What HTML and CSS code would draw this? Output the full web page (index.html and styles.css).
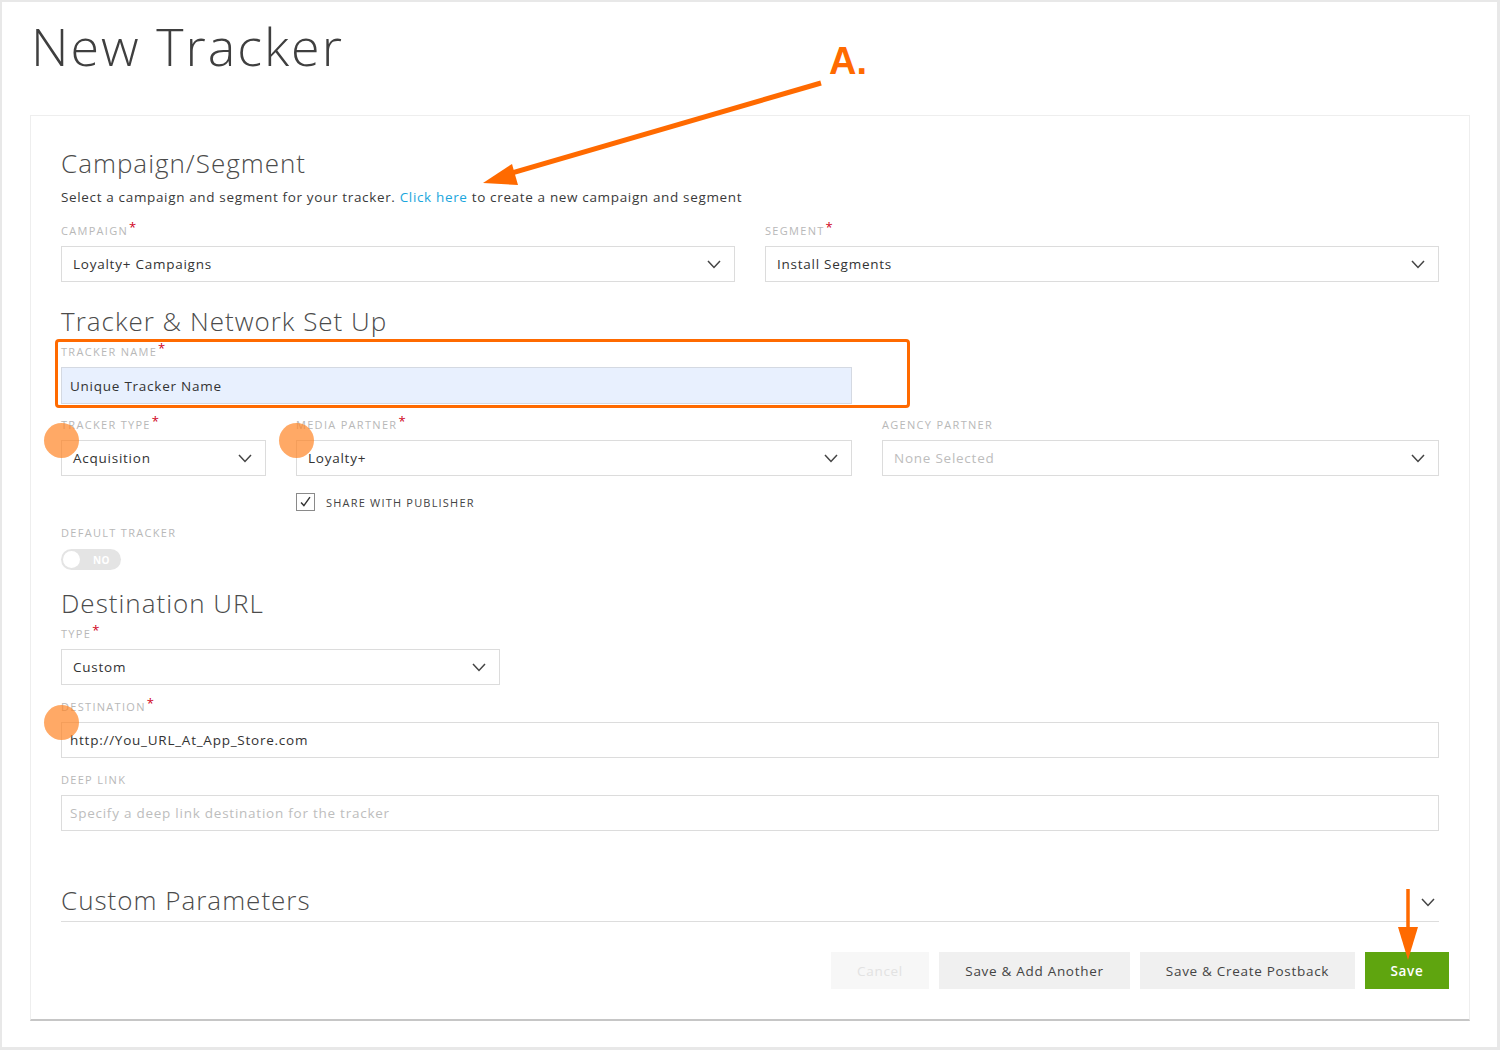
FILE: index.html
```html
<!DOCTYPE html>
<html lang="en">
<head>
    <meta charset="UTF-8">
    <meta name="viewport" content="width=device-width, initial-scale=1.0">
    <title>New Tracker</title>
    <link rel="stylesheet" href="styles.css">
</head>
<body>
    <div class="screen">
        <h1 class="page-title">New Tracker</h1>

        <div class="card">
            <h2 class="section-title">Campaign/Segment</h2>
            <p class="section-desc">Select a campaign and segment for your tracker. <a href="#" class="link">Click here</a> to create a new campaign and segment</p>

            <div class="row row-2">
                <div class="field">
                    <div class="label">Campaign<span class="req">*</span></div>
                    <div class="select">
                        <span>Loyalty+ Campaigns</span>
                        <svg class="chevron" viewBox="0 0 14 9"><path d="M1 1l6 6.5L13 1"/></svg>
                    </div>
                </div>
                <div class="field">
                    <div class="label">Segment<span class="req">*</span></div>
                    <div class="select">
                        <span>Install Segments</span>
                        <svg class="chevron" viewBox="0 0 14 9"><path d="M1 1l6 6.5L13 1"/></svg>
                    </div>
                </div>
            </div>

            <h2 class="section-title section-gap">Tracker &amp; Network Set Up</h2>

            <div class="field tracker-name">
                <div class="label">Tracker Name<span class="req">*</span></div>
                <div class="input input-filled">Unique Tracker Name</div>
            </div>

            <div class="row row-3">
                <div class="field">
                    <div class="label">Tracker Type<span class="req">*</span></div>
                    <div class="select">
                        <span>Acquisition</span>
                        <svg class="chevron" viewBox="0 0 14 9"><path d="M1 1l6 6.5L13 1"/></svg>
                    </div>
                </div>
                <div class="field">
                    <div class="label">Media Partner<span class="req">*</span></div>
                    <div class="select">
                        <span>Loyalty+</span>
                        <svg class="chevron" viewBox="0 0 14 9"><path d="M1 1l6 6.5L13 1"/></svg>
                    </div>
                    <label class="checkbox-row">
                        <span class="checkbox">
                            <svg viewBox="0 0 18 18"><path d="M4 9.5l3.2 3.5L14 3.5"/></svg>
                        </span>
                        <span class="checkbox-text">Share with publisher</span>
                    </label>
                </div>
                <div class="field">
                    <div class="label">Agency Partner</div>
                    <div class="select placeholder">
                        <span>None Selected</span>
                        <svg class="chevron" viewBox="0 0 14 9"><path d="M1 1l6 6.5L13 1"/></svg>
                    </div>
                </div>
            </div>

            <div class="field default-tracker">
                <div class="label">Default Tracker</div>
                <div class="toggle">
                    <span class="toggle-knob"></span>
                    <span class="toggle-text">NO</span>
                </div>
            </div>

            <h2 class="section-title section-gap-sm">Destination URL</h2>

            <div class="field field-type">
                <div class="label">Type<span class="req">*</span></div>
                <div class="select">
                    <span>Custom</span>
                    <svg class="chevron" viewBox="0 0 14 9"><path d="M1 1l6 6.5L13 1"/></svg>
                </div>
            </div>

            <div class="field field-gap">
                <div class="label">Destination<span class="req">*</span></div>
                <div class="input">http://You_URL_At_App_Store.com</div>
            </div>

            <div class="field field-gap">
                <div class="label">Deep Link</div>
                <div class="input placeholder">Specify a deep link destination for the tracker</div>
            </div>

            <div class="collapse-head">
                <h2 class="section-title">Custom Parameters</h2>
                <svg class="chevron" viewBox="0 0 14 9"><path d="M1 1l6 6.5L13 1"/></svg>
            </div>

            <div class="actions">
                <button class="btn btn-disabled">Cancel</button>
                <button class="btn">Save &amp; Add Another</button>
                <button class="btn">Save &amp; Create Postback</button>
                <button class="btn btn-primary">Save</button>
            </div>
        </div>

        <!-- annotations -->
        <div class="highlight-box"></div>
        <span class="dot" style="left: 44px; top: 423px;"></span>
        <span class="dot" style="left: 279px; top: 423px;"></span>
        <span class="dot" style="left: 44px; top: 705px;"></span>
        <div class="callout-label">A.</div>
        <svg class="arrows" viewBox="0 0 1500 1050">
            <line x1="821" y1="83" x2="508" y2="174"/>
            <polygon points="483,183 512,164 518,185"/>
            <line x1="1408" y1="889" x2="1408" y2="930" class="thin"/>
            <polygon points="1398,927 1418,927 1408,960"/>
        </svg>
    </div>
</body>
</html>
```

FILE: styles.css
```css
* {
    margin: 0;
    padding: 0;
    box-sizing: border-box;
}

body {
    font-family: 'Open Sans', 'DejaVu Sans', sans-serif;
    color: #333;
    background: #fff;
}

.screen {
    position: relative;
    width: 1500px;
    height: 1050px;
    padding: 16px 30px 0 30px;
    box-shadow: inset 2px 2px 0 #e8e8e8, inset -3px -3px 0 #e8e8e8;
    overflow: hidden;
}

.page-title {
    font-size: 52px;
    font-weight: 300;
    line-height: 60px;
    height: 60px;
    color: #3f3f3f;
    letter-spacing: 2px;
    padding-left: 1px;
    margin-bottom: 39px;
}

.card {
    width: 1440px;
    height: 906px;
    border: 1px solid #eee;
    border-bottom: 2px solid #c6c6c6;
    padding: 32px 30px 0 30px;
}

.section-title {
    font-size: 26px;
    font-weight: 300;
    line-height: 30px;
    height: 30px;
    color: #4b4b4b;
    letter-spacing: 1px;
}

.section-gap {
    margin-top: 24px;
}

.section-gap-sm {
    margin-top: 18px;
}

.section-desc {
    margin-top: 9px;
    font-size: 13.5px;
    line-height: 20px;
    height: 20px;
    color: #3a3a3a;
    letter-spacing: 0.65px;
}

.link {
    color: #1ba6dd;
    text-decoration: none;
}

.row {
    display: grid;
    gap: 30px;
}

.row-2 {
    margin-top: 16px;
    grid-template-columns: 1fr 1fr;
}

.row-3 {
    margin-top: 13px;
    grid-template-columns: 205px 556px 1fr;
}

.label {
    font-size: 11px;
    line-height: 16px;
    height: 16px;
    color: #b8b8b8;
    text-transform: uppercase;
    letter-spacing: 1.3px;
    margin-bottom: 7px;
}

.req {
    color: #d0021b;
    font-size: 13px;
    line-height: 0;
    position: relative;
    top: -3px;
    margin-left: 1px;
}

.select,
.input {
    height: 36px;
    border: 1px solid #dcdcdc;
    display: flex;
    align-items: center;
    justify-content: space-between;
    font-size: 13.5px;
    letter-spacing: 0.75px;
    color: #333;
    background: #fff;
}

.select {
    padding: 0 13px 0 11px;
}

.input {
    padding: 0 8px;
}

.placeholder {
    color: #bdbdbd;
}

.chevron {
    width: 14px;
    height: 9px;
    fill: none;
    stroke: #444;
    stroke-width: 1.5;
    flex-shrink: 0;
}

.tracker-name {
    width: 791px;
    margin-top: 8px;
}

.input-filled {
    height: 37px;
    background: #e8f0fe;
    border-color: #d4d9e2;
}

.checkbox-row {
    display: flex;
    align-items: center;
    gap: 11px;
    margin-top: 17px;
    height: 18px;
}

.checkbox {
    width: 19px;
    height: 18px;
    border: 1px solid #8a8a8a;
    display: flex;
}

.checkbox svg {
    width: 17px;
    height: 16px;
    fill: none;
    stroke: #333;
    stroke-width: 1.6;
}

.checkbox-text {
    font-size: 11px;
    color: #444;
    text-transform: uppercase;
    letter-spacing: 1.2px;
}

.default-tracker {
    margin-top: 14px;
}

.default-tracker .label {
    margin-bottom: 8px;
}

.toggle {
    width: 60px;
    height: 21px;
    border-radius: 11px;
    background: #e4e4e4;
    display: flex;
    align-items: center;
    padding-left: 2px;
}

.toggle-knob {
    width: 17px;
    height: 17px;
    border-radius: 50%;
    background: #fff;
}

.toggle-text {
    margin-left: 13px;
    font-size: 10px;
    font-weight: 700;
    color: #fff;
    letter-spacing: 0.3px;
}

.field-type {
    width: 439px;
    margin-top: 8px;
}

.field-gap {
    margin-top: 14px;
}

.collapse-head {
    margin-top: 54px;
    height: 37px;
    border-bottom: 1px solid #ddd;
    display: flex;
    justify-content: space-between;
    align-items: flex-start;
    padding-right: 4px;
}

.collapse-head .chevron {
    margin-top: 13px;
}

.actions {
    margin-top: 30px;
    margin-right: -10px;
    display: flex;
    justify-content: flex-end;
    gap: 10px;
}

.btn {
    height: 37px;
    border: none;
    background: #f0f0f0;
    font-family: 'Open Sans', 'DejaVu Sans', sans-serif;
    font-size: 13.5px;
    letter-spacing: 0.7px;
    color: #444;
    padding: 0;
}

.btn:nth-child(2) {
    width: 191px;
}

.btn:nth-child(3) {
    width: 215px;
}

.btn-disabled {
    width: 98px;
    background: #f7f7f7;
    color: #e2e2e2;
}

.btn-primary {
    width: 84px;
    background: #5fa50f;
    color: #fff;
    font-weight: 600;
}

/* annotation overlay */
.highlight-box {
    position: absolute;
    left: 55px;
    top: 339px;
    width: 855px;
    height: 69px;
    border: 3px solid #ff6a00;
    border-radius: 4px;
}

.dot {
    position: absolute;
    width: 35px;
    height: 35px;
    border-radius: 50%;
    background: rgba(255, 128, 30, 0.68);
}

.callout-label {
    position: absolute;
    left: 829px;
    top: 38px;
    font-family: 'Liberation Sans', Arial, sans-serif;
    font-weight: 700;
    font-size: 38px;
    line-height: 46px;
    color: #ff6a00;
}

.arrows {
    position: absolute;
    left: 0;
    top: 0;
    width: 1500px;
    height: 1050px;
    pointer-events: none;
}

.arrows line {
    stroke: #ff6a00;
    stroke-width: 5;
}

.arrows line.thin {
    stroke-width: 3.5;
}

.arrows polygon {
    fill: #ff6a00;
}
```
